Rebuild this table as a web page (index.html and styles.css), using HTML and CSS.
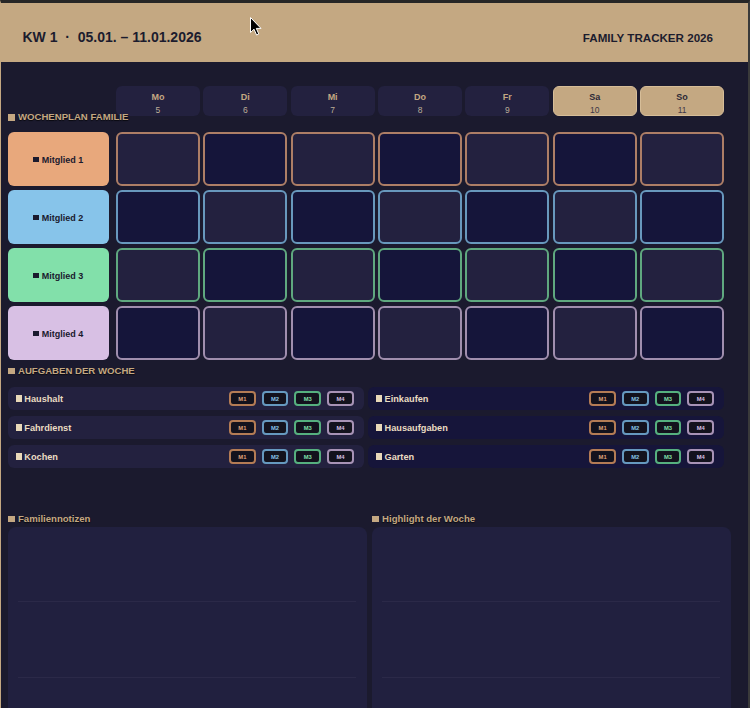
FILE: index.html
```html
<!DOCTYPE html>
<html lang="de">
<head>
<meta charset="utf-8">
<title>Family Tracker 2026</title>
<link rel="stylesheet" href="styles.css">
</head>
<body>
<div class="frame">
  <header class="header">
    <div class="week">KW 1&nbsp; ·&nbsp; 05.01. – 11.01.2026</div>
    <div class="brand">FAMILY TRACKER 2026</div>
  </header>

  <main class="main">
    <section class="plan">
      <div class="section-title plan-title">WOCHENPLAN FAMILIE</div>
      <div class="day"><b>Mo</b><span>5</span></div>
      <div class="day"><b>Di</b><span>6</span></div>
      <div class="day"><b>Mi</b><span>7</span></div>
      <div class="day"><b>Do</b><span>8</span></div>
      <div class="day"><b>Fr</b><span>9</span></div>
      <div class="day weekend"><b>Sa</b><span>10</span></div>
      <div class="day weekend"><b>So</b><span>11</span></div>

      <div class="member m1">Mitglied 1</div>
      <div class="cell m1 light"></div><div class="cell m1 dark"></div><div class="cell m1 light"></div><div class="cell m1 dark"></div><div class="cell m1 light"></div><div class="cell m1 dark"></div><div class="cell m1 light"></div>

      <div class="member m2">Mitglied 2</div>
      <div class="cell m2 dark"></div><div class="cell m2 light"></div><div class="cell m2 dark"></div><div class="cell m2 light"></div><div class="cell m2 dark"></div><div class="cell m2 light"></div><div class="cell m2 dark"></div>

      <div class="member m3">Mitglied 3</div>
      <div class="cell m3 light"></div><div class="cell m3 dark"></div><div class="cell m3 light"></div><div class="cell m3 dark"></div><div class="cell m3 light"></div><div class="cell m3 dark"></div><div class="cell m3 light"></div>

      <div class="member m4">Mitglied 4</div>
      <div class="cell m4 dark"></div><div class="cell m4 light"></div><div class="cell m4 dark"></div><div class="cell m4 light"></div><div class="cell m4 dark"></div><div class="cell m4 light"></div><div class="cell m4 dark"></div>
    </section>

    <div class="section-title tasks-title">AUFGABEN DER WOCHE</div>
    <section class="tasks">
      <div class="task light"><span class="task-name">Haushalt</span><span class="badges"><span class="badge b1">M1</span><span class="badge b2">M2</span><span class="badge b3">M3</span><span class="badge b4">M4</span></span></div>
      <div class="task dark"><span class="task-name">Einkaufen</span><span class="badges"><span class="badge b1">M1</span><span class="badge b2">M2</span><span class="badge b3">M3</span><span class="badge b4">M4</span></span></div>
      <div class="task light"><span class="task-name">Fahrdienst</span><span class="badges"><span class="badge b1">M1</span><span class="badge b2">M2</span><span class="badge b3">M3</span><span class="badge b4">M4</span></span></div>
      <div class="task dark"><span class="task-name">Hausaufgaben</span><span class="badges"><span class="badge b1">M1</span><span class="badge b2">M2</span><span class="badge b3">M3</span><span class="badge b4">M4</span></span></div>
      <div class="task light"><span class="task-name">Kochen</span><span class="badges"><span class="badge b1">M1</span><span class="badge b2">M2</span><span class="badge b3">M3</span><span class="badge b4">M4</span></span></div>
      <div class="task dark"><span class="task-name">Garten</span><span class="badges"><span class="badge b1">M1</span><span class="badge b2">M2</span><span class="badge b3">M3</span><span class="badge b4">M4</span></span></div>
    </section>

    <section class="notes">
      <div class="note">
        <div class="section-title note-title">Familiennotizen</div>
        <div class="note-box"><div class="note-line"></div><div class="note-line"></div><div class="note-line"></div></div>
      </div>
      <div class="note">
        <div class="section-title note-title">Highlight der Woche</div>
        <div class="note-box"><div class="note-line"></div><div class="note-line"></div><div class="note-line"></div></div>
      </div>
    </section>
  </main>

  <svg class="cursor" width="12" height="19" viewBox="0 0 12 19"><path d="M0.5 0.5 L0.5 15.5 L4 12.2 L6.6 18 L8.8 17 L6.3 11.4 L11 11.4 Z" fill="#000" stroke="#fff" stroke-width="1"/></svg>
</div>
</body>
</html>
```

FILE: styles.css
```css
* { box-sizing: border-box; }
html, body { margin: 0; padding: 0; }
body {
  font-family: "Liberation Sans", Arial, sans-serif;
  background: #1b1a2e;
  width: 750px;
  height: 708px;
  overflow: hidden;
}
.frame {
  position: relative;
  height: 708px;
  border-top: 3px solid #262626;
  border-left: 1px solid #c4a882;
  border-right: 2px solid #3a3a3a;
  background: #1b1a2e;
  overflow: hidden;
}
.header {
  height: 59px;
  background: #c4a882;
  display: flex;
  justify-content: space-between;
  align-items: center;
  padding: 9px 35px 0 21.5px;
  color: #1c1c2e;
  font-weight: bold;
}
.week { font-size: 14px; }
.brand { font-size: 11.6px; }

.main { padding: 23.7px 24px 0 6.5px; }

.section-title {
  color: #c4a882;
  font-weight: bold;
  font-size: 9.6px;
  line-height: 12px;
  white-space: nowrap;
  text-shadow: 0 1px 1px rgba(0,0,0,0.7);
  display: flex;
  align-items: center;
}
.section-title::before {
  content: "";
  width: 6.7px;
  height: 6.7px;
  background: #c4a882;
  margin-right: 3px;
  flex: none;
}

.plan {
  display: grid;
  grid-template-columns: 105px repeat(7, 1fr);
  grid-template-rows: 42.3px repeat(4, 53.7px);
  column-gap: 3.5px;
  row-gap: 4.3px;
}
.plan-title {
  align-self: start;
  margin-top: 25.6px;
  position: relative;
  z-index: 1;
  padding-left: 0.8px;
}
.day {
  align-self: start;
  height: 30.6px;
  background: #23213f;
  border-radius: 6px;
  display: flex;
  flex-direction: column;
  align-items: center;
  justify-content: center;
  padding-top: 5px;
  gap: 2.5px;
  color: #c4a882;
}
.day b { font-size: 9px; line-height: 10px; }
.day span { font-size: 8.5px; line-height: 10px; color: #bcae98; }
.day.weekend {
  background: #c4a882;
  border: 1px solid #d6bd98;
  color: #2c2838;
}
.day.weekend span { color: #3e3848; }

.member {
  margin-right: 3.5px;
  border-radius: 6px;
  display: flex;
  align-items: center;
  justify-content: center;
  font-size: 9px;
  font-weight: bold;
  color: #1a1a2e;
  padding-top: 1px;
}
.member::before {
  content: "";
  width: 5.5px;
  height: 5.5px;
  background: #1a1a2e;
  margin-right: 3.2px;
}
.member.m1 { background: #e8a87c; }
.member.m2 { background: #87c4ea; }
.member.m3 { background: #82e0aa; }
.member.m4 { background: #d8c0e4; }

.cell {
  border-radius: 6px;
  border: 2px solid;
}
.cell.light { background: #23213f; }
.cell.dark { background: #15153a; }
.cell.m1 { border-color: #ad7e66; }
.cell.m2 { border-color: #6898bd; }
.cell.m3 { border-color: #5fa87f; }
.cell.m4 { border-color: #a08eae; }

.tasks-title { margin-top: 5px; padding-left: 0.8px; }

.tasks {
  margin-top: 10px;
  display: grid;
  grid-template-columns: 1fr 1fr;
  column-gap: 4px;
  row-gap: 5.5px;
}
.task {
  height: 23.5px;
  border-radius: 6px;
  display: flex;
  align-items: center;
  justify-content: space-between;
  padding: 0 10px 0 8px;
}
.task.light { background: #23213f; }
.task.dark { background: #16153a; }
.task-name {
  display: flex;
  align-items: center;
  font-size: 9.2px;
  font-weight: bold;
  color: #eadcc2;
}
.task-name::before {
  content: "";
  width: 6.4px;
  height: 6.4px;
  background: #e8d8b8;
  margin-right: 2.4px;
}
.badges { display: flex; gap: 6px; }
.badge {
  width: 26.7px;
  height: 15.3px;
  border-radius: 4px;
  border: 2px solid;
  background: #13121d;
  display: flex;
  align-items: center;
  justify-content: center;
  font-size: 5.8px;
  font-weight: bold;
}
.b1 { border-color: #b47c55; color: #e0a47a; }
.b2 { border-color: #6699bf; color: #87c4ea; }
.b3 { border-color: #56b07f; color: #82e0aa; }
.b4 { border-color: #a893b6; color: #d8c0e4; }

.notes {
  margin-top: 44.6px;
  margin-right: -7px;
  display: grid;
  grid-template-columns: 1fr 1fr;
  column-gap: 4.6px;
}
.note-title { margin-bottom: 1.5px; padding-left: 0.8px; }
.note-box {
  background: #21203f;
  border-radius: 8px;
  padding: 0 10.7px;
  height: 240px;
}
.note-line {
  height: 75.6px;
  border-bottom: 1px solid #2b2948;
}

.cursor {
  position: absolute;
  left: 249px;
  top: 14px;
}
```
